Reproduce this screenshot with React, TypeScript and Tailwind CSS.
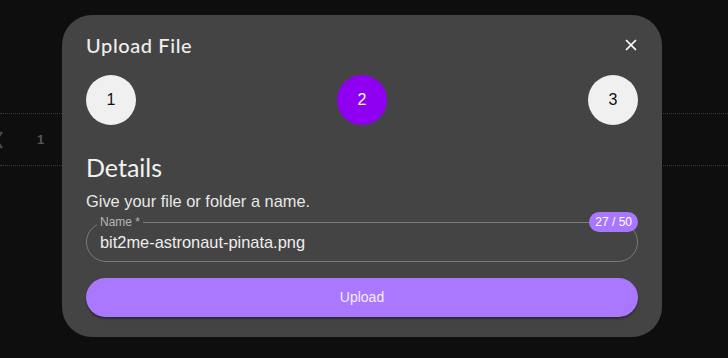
import { X } from "lucide-react";

function Step({ n, active }: { n: number; active?: boolean }) {
  return (
    <div
      className={
        active
          ? "w-[50px] h-[50px] rounded-full bg-[#8f00f2] text-white flex items-center justify-center text-[16px]"
          : "w-[50px] h-[50px] rounded-full bg-[#f0f0f0] text-[#111] flex items-center justify-center text-[16px]"
      }
    >
      {n}
    </div>
  );
}

export default function App() {
  return (
    <div className="relative w-full h-[358px] bg-[#0e0e0e] overflow-hidden font-['Liberation_Sans',Arial,sans-serif]">
      {/* page behind the dialog */}
      <div className="pt-[113px]">
        <div className="h-[53px] border-t border-b border-dotted border-[#3a3a3a] flex items-center">
          <svg width="10" height="20" viewBox="0 0 10 20" className="-ml-[6px] text-[#4a4a4a]">
            <path d="M8 2 L2 10 L8 18" fill="none" stroke="currentColor" strokeWidth="2.5" />
          </svg>
          <span className="ml-[33px] text-[13px] font-bold text-[#555]">1</span>
        </div>
      </div>

      {/* dialog */}
      <div className="absolute left-[62px] top-[15px] w-[600px] rounded-[30px] bg-[#444444] px-6 pt-[16px] pb-[20px]">
        <div className="flex items-center justify-between h-[28px]">
          <h2 className="text-[20px] leading-[28px] text-[#eeeeee] font-['Lato',sans-serif] font-medium tracking-[0.6px]">
            Upload File
          </h2>
          <X size={18} strokeWidth={2.3} className="text-white -mr-[2px]" />
        </div>

        <div className="mt-4 flex items-center justify-between">
          <Step n={1} />
          <Step n={2} active />
          <Step n={3} />
        </div>

        <h3 className="mt-[28px] text-[25px] leading-[28px] text-[#f2f2f2] font-['Lato',sans-serif]">
          Details
        </h3>
        <p className="mt-[10px] text-[16.4px] leading-[20px] text-[#e8e8e8]">
          Give your file or folder a name.
        </p>

        <div className="relative mt-[11px] h-[40px] rounded-full border border-[#7a7a7a] flex items-center pl-[13px]">
          <span className="absolute -top-[8px] left-[10px] bg-[#444444] px-[3px] text-[12px] leading-[14px] text-[#b5b5b5]">
            Name *
          </span>
          <span className="text-[16.4px] text-[#eeeeee]">bit2me-astronaut-pinata.png</span>
          <span className="absolute -top-[11px] -right-[1px] h-[20px] px-[6px] rounded-full bg-[#a977ff] text-white text-[12px] leading-[20px]">
            27 / 50
          </span>
        </div>

        <button className="mt-[16px] w-full h-[39px] rounded-full bg-[#aa78ff] text-[#f3ecff] text-[14px] shadow-[0_2px_2px_rgba(0,0,0,0.35)]">
          Upload
        </button>
      </div>
    </div>
  );
}
